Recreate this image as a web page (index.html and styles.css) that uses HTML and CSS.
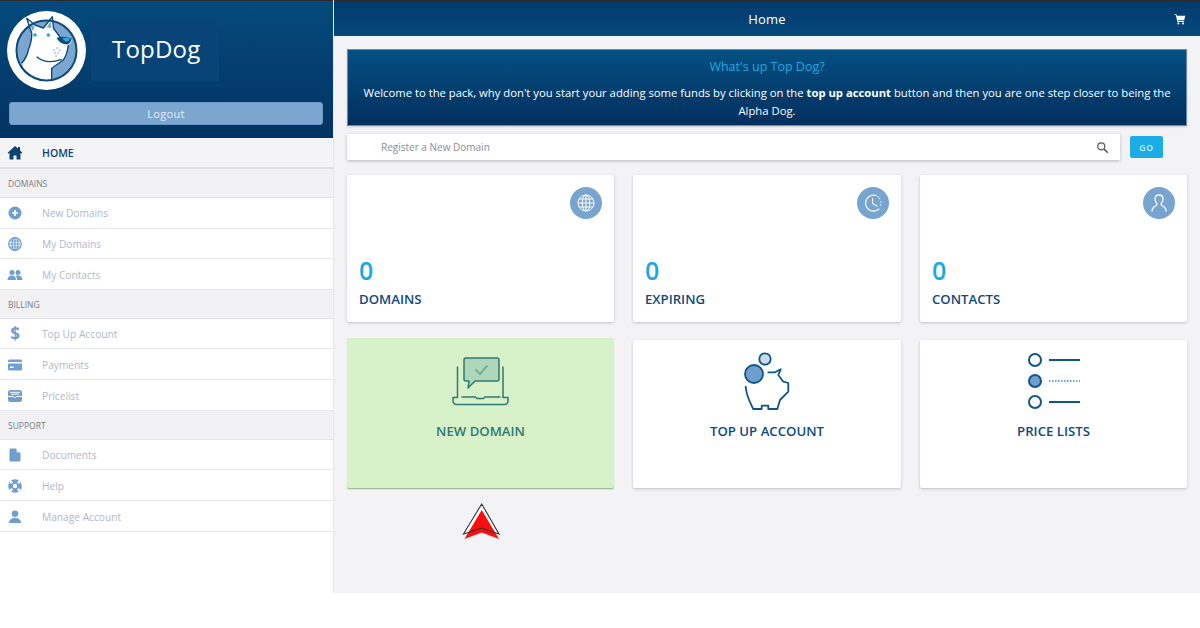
FILE: index.html
```html
<!DOCTYPE html>
<html lang="en">
<head>
<meta charset="utf-8">
<title>TopDog</title>
<link rel="stylesheet" href="styles.css">
</head>
<body>
<div class="app">
  <aside class="sidebar">
    <div class="brand">
      <div class="brand-top">
        <svg class="logo" viewBox="0 0 79 79" aria-hidden="true">
          <defs><clipPath id="disc"><circle cx="39.500" cy="39.500" r="30"/></clipPath></defs>
          <circle cx="39.500" cy="39.500" r="39.500" fill="#fff"/>
          <circle cx="39.500" cy="39.500" r="30" fill="#7ba6d0"/>
          <path d="M19.700 7.300 L28 14 L36.300 17 L45.300 5.700 L46.500 17.300 Q50 22 53 26 L64 28 Q66 31 61.300 34 Q60 44 56.300 49 L44.700 57.300 L44.700 69.500 Q28 69 17 58 L14.700 52.300 Q20 46 21.300 39 Q25 30 24.700 22.300 Z" fill="#fff"/>
          <path clip-path="url(#disc)" d="M14.700 52.300 Q20 46 21.300 39 Q25 30 24.700 22.300 M44.700 72 L44.700 57.300 L56.300 49 Q60 44 61.300 34" fill="none" stroke="#0d4a7c" stroke-width="1.400"/>
          <path d="M24.700 22.300 L19.700 7.300 L28 14 L36.300 17 L45.300 5.700 L46.500 17.300 Q50 22 53 26" fill="none" stroke="#0d4a7c" stroke-width="1.400" stroke-linejoin="round"/>
          <path d="M22.500 12 L25.500 20 L28 16Z M43.500 10.500 L39.500 16.500 L44.500 17Z" fill="#7ba6d0"/>
          <circle cx="39.500" cy="39.500" r="30" fill="none" stroke="#0d4a7c" stroke-width="2"/>
          <path d="M49.500 27 Q56 24.500 64.500 27.500 Q64 32.500 60 33.500 Q53 33 49.500 27Z" fill="#0d4a7c"/>
          <path d="M55 27.300 Q60 26 63.500 28 Q61 31 58.500 30.500Z" fill="#27a9e1"/>
          <path d="M29.700 45.700 Q39 54 54.700 48.300" fill="none" stroke="#0d4a7c" stroke-width="1.300"/>
          <circle cx="28" cy="24" r="1.800" fill="#27a9e1"/><circle cx="41.300" cy="24" r="1.800" fill="#27a9e1"/>
          <g fill="#7ba6d0"><circle cx="47" cy="39" r=".8"/><circle cx="50" cy="37" r=".8"/><circle cx="53" cy="39" r=".8"/><circle cx="48" cy="42" r=".8"/><circle cx="51" cy="42" r=".8"/><circle cx="49" cy="45" r=".8"/></g>
        </svg>
        <div class="brand-name">TopDog</div>
      </div>
      <button class="logout">Logout</button>
    </div>
    <nav>
      <a class="row home">
        <svg class="ico" viewBox="0 0 16 16"><path fill="#0d426f" d="M8 1 0.700 7.800l.9.900.9-.800v6.600h4v-4h3v4h4V7.900l.9.800.9-.900L13 5.300V2h-2v1.500Z"/></svg>
        <span>HOME</span>
      </a>
      <div class="section">DOMAINS</div>
      <a class="row"><svg class="ico" viewBox="0 0 16 16"><circle cx="8" cy="8" r="6.500" fill="#6f9fce"/><path d="M8 5v6M5 8h6" stroke="#fff" stroke-width="1.700"/></svg><span>New Domains</span></a>
      <a class="row r2"><svg class="ico" viewBox="0 0 16 16"><g fill="none" stroke="#6f9fce" stroke-width="1.200"><circle cx="8" cy="8" r="6.300"/><ellipse cx="8" cy="8" rx="3" ry="6.300"/><path d="M8 1.700v12.600M1.700 8h12.600M2.500 5h11M2.500 11h11"/></g></svg><span>My Domains</span></a>
      <a class="row low"><svg class="ico" viewBox="0 0 16 16"><g fill="#6f9fce"><circle cx="5" cy="5.500" r="2.500"/><circle cx="11" cy="5.500" r="2.500"/><path d="M0.500 13c0-3 2-4.500 4.500-4.500S9 10 9 13ZM10 13c0-2-.5-3.400-1.500-4.200.7-.3 1.600-.3 2.500-.3 2.500 0 4.500 1.500 4.500 4.500Z"/></g></svg><span>My Contacts</span></a>
      <div class="section">BILLING</div>
      <a class="row r2"><span class="dollar">$</span><span>Top Up Account</span></a>
      <a class="row low"><svg class="ico" viewBox="0 0 16 16"><rect x="1" y="2.500" width="14" height="11" rx="1.500" fill="#6f9fce"/><rect x="1" y="5" width="14" height="1.500" fill="#fff"/><rect x="3" y="9.500" width="3.500" height="1.500" fill="#fff"/></svg><span>Payments</span></a>
      <a class="row low"><svg class="ico" viewBox="0 0 16 16"><rect x="1" y="2" width="14" height="12" rx="2.500" fill="#6f9fce"/><path d="M3 4.300h10M4 6.200h8" stroke="#fff" stroke-width="1"/><path d="M1 8.500h5.500l1 1h1l1-1H15" stroke="#fff" stroke-width="1" fill="none"/></svg><span>Pricelist</span></a>
      <div class="section">SUPPORT</div>
      <a class="row r2"><svg class="ico" viewBox="0 0 16 16"><path fill="#6f9fce" d="M3.500 1.500h5.500l4.500 4.500v7.500a1 1 0 0 1-1 1H3.500a1 1 0 0 1-1-1v-11a1 1 0 0 1 1-1Z"/><path fill="#fff" d="M9.500 1.500V5.500h4Z" opacity=".75"/></svg><span>Documents</span></a>
      <a class="row low"><svg class="ico" viewBox="0 0 16 16"><circle cx="8" cy="8" r="6.800" fill="#6f9fce"/><circle cx="8" cy="8" r="2.200" fill="#fff"/><g stroke="#fff" stroke-width="2.400"><path d="M3.300 3.300l1.900 1.900M12.700 3.300l-1.900 1.900M3.300 12.700l1.900-1.900M12.700 12.700l-1.900-1.900"/></g></svg><span>Help</span></a>
      <a class="row low"><svg class="ico" viewBox="0 0 16 16"><g fill="#6f9fce"><circle cx="8" cy="4.800" r="3.300"/><path d="M2 14c0-3.500 2.500-5 6-5s6 1.500 6 5Z"/></g></svg><span>Manage Account</span></a>
    </nav>
  </aside>
  <main class="main">
    <header class="topbar">
      <span class="top-title">Home</span>
      <svg class="cart" viewBox="0 0 16 16"><path fill="#fff" d="M0.500 1.500h2.800l.5 2H15l-1.500 6H5.200l.3 1.300H13.500v1.200H4.500L2.400 2.700H.5Z"/><circle cx="5.800" cy="14" r="1.400" fill="#fff"/><circle cx="12" cy="14" r="1.400" fill="#fff"/></svg>
    </header>
    <div class="content">
      <section class="banner">
        <h2>What's up Top Dog?</h2>
        <p>Welcome to the pack, why don't you start your adding some funds by clicking on the <b>top up account</b> button and then you are one step closer to being the Alpha Dog.</p>
      </section>
      <div class="search-row">
        <div class="search">
          <span>Register a New Domain</span>
          <svg class="search-ico" viewBox="0 0 16 16"><circle cx="6.500" cy="6.500" r="4.300" fill="none" stroke="#555" stroke-width="1.500"/><path d="M10 10l4.500 4.500" stroke="#555" stroke-width="1.800"/></svg>
        </div>
        <button class="go">GO</button>
      </div>
      <div class="grid">
        <div class="card stat">
          <div class="badge"><svg viewBox="0 0 32 32"><g fill="none" stroke="#fff" stroke-width="1"><circle cx="16" cy="16" r="8"/><ellipse cx="16" cy="16" rx="3.800" ry="8"/><path d="M16 8v16M8 16h16M9.200 12h13.600M9.200 20h13.600"/></g></svg></div>
          <div class="num">0</div><div class="label">DOMAINS</div>
        </div>
        <div class="card stat">
          <div class="badge"><svg viewBox="0 0 32 32"><g fill="none" stroke="#fff" stroke-width="1.100" stroke-linecap="round"><path d="M19 8.500A8 8 0 1 0 22 22"/><path d="M22.500 11.500l.1.100M24 15v.1M23.900 18v.1M21 9.700v.1" stroke-width="1.400"/><path d="M15.500 11.500V16.500L20 19"/></g></svg></div>
          <div class="num">0</div><div class="label">EXPIRING</div>
        </div>
        <div class="card stat">
          <div class="badge"><svg viewBox="0 0 32 32"><path fill="none" stroke="#fff" stroke-width="1.300" stroke-linecap="round" d="M9 24c0-3 1.500-4 3.500-5 1.500-.7 1.500-2 1-3-1-1.200-1.500-2.700-1.500-4.200C12 9.500 13.700 8 16 8s4 1.500 4 3.800c0 1.500-.5 3-1.500 4.200-.5 1-.5 2.300 1 3 2 1 3.500 2 3.500 5"/></svg></div>
          <div class="num">0</div><div class="label">CONTACTS</div>
        </div>
        <div class="card action green">
          <svg class="act-ico" viewBox="0 -6 60 60"><g fill="none" stroke="#2f7a72" stroke-width="1.500" stroke-linecap="round" stroke-linejoin="round"><path d="M6.500 11V41M52 11V41"/><path d="M2 41.500V45a3.500 3.500 0 0 0 3.500 3.500h48A3.500 3.500 0 0 0 57 45v-3.500M2 41.500h4.500M52 41.500h5M11 41h13.500l1.500 1.500h6.500l1.500-1.500H49"/><path fill="#aed6b8" d="M13 4a2 2 0 0 1 2-2h31a2 2 0 0 1 2 2v19a2 2 0 0 1-2 2H24l-7 7 1-7h-3a2 2 0 0 1-2-2Z"/><path d="M25 14l4 4 7-8" stroke="#6fb09f" stroke-width="2"/></g></svg>
          <div class="act-label teal">NEW DOMAIN</div>
        </div>
        <div class="card action">
          <svg class="act-ico" viewBox="0 0 60 60"><g fill="none" stroke="#0f5588" stroke-width="1.800" stroke-linecap="round" stroke-linejoin="round"><circle cx="28" cy="9" r="5.700" fill="#c6dbee"/><circle cx="17" cy="24" r="9" fill="#6f9fce"/><path d="M31.300 22.300H38L43.700 19.300 41.300 25 46.300 31.700 51.300 33V41.700L43 50 40.300 59H31.300V55.700H24.700V59H16.300C14 54 9.500 47 8.700 36.700"/></g></svg>
          <div class="act-label">TOP UP ACCOUNT</div>
        </div>
        <div class="card action">
          <svg class="act-ico" viewBox="0 0 60 60"><g fill="none" stroke="#0f5588" stroke-width="2"><circle cx="11" cy="10" r="6" fill="#fff"/><circle cx="11" cy="31" r="6" fill="#6f9fce"/><circle cx="11" cy="52" r="6" fill="#fff"/><path d="M25 10h31M25 52h31"/><path d="M25 31h31" stroke="#6f9fce" stroke-dasharray="1.500 1.500"/></g></svg>
          <div class="act-label">PRICE LISTS</div>
        </div>
      </div>
      <svg class="arrow" viewBox="0 0 44 44"><path d="M21.700 4 L39 34 L21.700 28 L3.500 34Z" fill="#fff"/><path d="M21.700 10 L39 39 L21.700 32.500 L4.500 39Z" fill="#fa0f0f"/><path d="M21.700 4 L39 34 L21.700 28 L3.500 34Z" fill="none" stroke="#333" stroke-width="1.100"/></svg>
    </div>
  </main>
</div>
</body>
</html>
```
FILE: styles.css
```css
* { box-sizing: border-box; }
html, body { margin: 0; padding: 0; }
body {
  background: #fff;
  font-family: "Open Sans", "Liberation Sans", sans-serif;
  width: 1200px;
  height: 628px;
  overflow: hidden;
}
.app {
  display: flex;
  height: 593px;
  background: #f3f3f6;
}
.sidebar {
  width: 334px;
  flex: none;
  background: #fff;
  border-right: 1px solid #e8e8ec;
}
.brand {
  height: 138px;
  border-top: 1px solid #2a2a2a;
  background: linear-gradient(#044a7c, #023363);
  padding: 10px 10px 0 7px;
  display: flex;
  flex-direction: column;
}
.brand-top { display: flex; align-items: flex-start; }
.logo { width: 79px; height: 79px; flex: none; display: block; }
.brand-name {
  margin: 9px 0 0 5px;
  width: 128px;
  height: 61px;
  background: #084477;
  color: #fff;
  font-size: 24px;
  line-height: 57px;
  padding-left: 21px;
  letter-spacing: .2px;
}
.logout {
  margin: 12px 0 0 2px;
  width: 314px;
  height: 23px;
  border: 1px solid #6a97c4;
  border-radius: 3px;
  background: #7ba6d0;
  color: #e4edf6;
  font: 11px "Open Sans", sans-serif;
  letter-spacing: .3px;
  padding: 0;
}
.row {
  display: flex;
  align-items: center;
  height: 31px;
  padding-left: 7px;
  border-bottom: 1px solid #e8e9ec;
  background: #fff;
  color: #b0b8ce;
  font-size: 10.200px;
}
.row span:last-child { margin-left: 19px; }
.r2 { height: 30px; }
.low { padding-top: 1px; }
.home {
  height: 31px;
  background: #f4f4f6;
  border-bottom: 2px solid #dfe0e3;
  color: #0d426f;
  font-weight: 600;
  font-size: 10.500px;
}
.ico { width: 16px; height: 16px; flex: none; }
.dollar {
  width: 16px;
  flex: none;
  text-align: center;
  color: #6f9fce;
  font-weight: 700;
  font-size: 17px;
  line-height: 1;
}
.section {
  height: 29px;
  display: flex;
  align-items: center;
  padding-left: 8px;
  padding-top: 1px;
  background: #f2f2f5;
  border-bottom: 1px solid #e2e3e6;
  color: #7a7c82;
  font-size: 8.500px;
}
.main { flex: 1; min-width: 0; display: flex; flex-direction: column; }
.topbar {
  height: 36px;
  flex: none;
  border-top: 1px solid #2a2a2a;
  background: linear-gradient(#023a6b, #05497d);
  color: #fff;
  font-size: 13px;
  display: flex;
  align-items: center;
  justify-content: center;
  position: relative;
}
.top-title { letter-spacing: .2px; }
.cart { position: absolute; right: 14px; top: 12px; width: 12px; height: 12px; }
.content { padding: 13px 13px 0 13px; position: relative; flex: 1; }
.banner {
  height: 77px;
  background: linear-gradient(#045082, #022f5e);
  border: 1px solid #6c8ba8;
  box-shadow: 0 1px 2px rgba(0,0,0,.15);
  color: #fff;
  text-align: center;
  padding: 0 8px;
}
.banner h2 {
  margin: 8px 0 0;
  color: #22a7e0;
  font-size: 12.500px;
  font-weight: 400;
  line-height: 18px;
}
.banner p {
  margin: 8px 0 0;
  font-size: 11.270px;
  line-height: 18px;
}
.search-row { display: flex; align-items: center; margin-top: 8px; }
.search {
  width: 773px;
  height: 26px;
  background: #fff;
  box-shadow: 0 1px 3px rgba(0,0,0,.25);
  color: #8a8d96;
  font-size: 10px;
  display: flex;
  align-items: center;
  justify-content: space-between;
  padding: 0 11px 0 34px;
}
.search-ico { width: 13px; height: 13px; }
.go {
  margin-left: 10px;
  width: 33px;
  height: 22px;
  border: 0;
  border-radius: 2px;
  background: #1cace6;
  color: #d4eefa;
  font: 600 8.500px "Open Sans", sans-serif;
  letter-spacing: .8px;
  padding: 0;
}
.grid {
  display: grid;
  grid-template-columns: 267px 268px 267px;
  column-gap: 19px;
  grid-template-rows: 147px 148px;
  row-gap: 18px;
  margin-top: 15px;
}
.card {
  background: #fff;
  border-radius: 2px;
  box-shadow: 0 1px 3px rgba(0,0,0,.22);
}
.stat { position: relative; padding: 78px 12px 0; }
.badge {
  position: absolute;
  top: 12px;
  right: 12px;
  width: 32px;
  height: 32px;
  border-radius: 50%;
  background: #78a5d0;
}
.badge svg { width: 32px; height: 32px; display: block; }
.num { color: #1ca8e0; font-size: 25px; font-weight: 600; line-height: 34px; }
.label { color: #0f4a7c; font-size: 13.200px; font-weight: 600; line-height: 20px; margin-top: 2px; }
.action { text-align: center; padding-top: 10px; }
.act-ico { width: 60px; height: 60px; display: block; margin: 0 auto; }
.act-label {
  color: #0f4a7c;
  font-size: 13.200px;
  font-weight: 600;
  line-height: 18px;
  margin-top: 12px;
}
.green { background: #d7f1c9; box-shadow: 0 1px 1px rgba(60,110,60,.4), 0 -2px 0 #d8f0ca, 0 2px 0 #d8f0ca; }
.teal { color: #2f7a72; }
.arrow { position: absolute; left: 126px; top: 464px; width: 44px; height: 44px; }
```
